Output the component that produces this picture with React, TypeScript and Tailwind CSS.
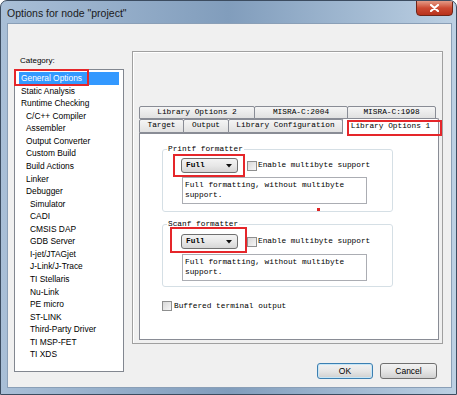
import React from 'react'

const mono = "font-['Liberation_Mono','DejaVu_Sans_Mono',monospace]"
const sans = "font-['Liberation_Sans',Arial,sans-serif]"

const categories: [string, number][] = [
  ['General Options', 0],
  ['Static Analysis', 0],
  ['Runtime Checking', 0],
  ['C/C++ Compiler', 1],
  ['Assembler', 1],
  ['Output Converter', 1],
  ['Custom Build', 1],
  ['Build Actions', 1],
  ['Linker', 1],
  ['Debugger', 1],
  ['Simulator', 2],
  ['CADI', 2],
  ['CMSIS DAP', 2],
  ['GDB Server', 2],
  ['I-jet/JTAGjet', 2],
  ['J-Link/J-Trace', 2],
  ['TI Stellaris', 2],
  ['Nu-Link', 2],
  ['PE micro', 2],
  ['ST-LINK', 2],
  ['Third-Party Driver', 2],
  ['TI MSP-FET', 2],
  ['TI XDS', 2],
]

const indent = ['pl-[2px]', 'pl-[7px]', 'pl-[11px]']

function Checkbox() {
  return (
    <span className="block w-[10px] h-[10px] shrink-0 border border-[#8e8f8f] bg-gradient-to-br from-[#d8d8d8] to-[#f7f7f7]" />
  )
}

function Select({ redBox }: { redBox: string }) {
  return (
    <div className="relative w-[57px] h-[15px] shrink-0">
      <div className="flex items-center h-full rounded-[3px] border border-[#707070] bg-gradient-to-b from-[#f3f3f3] via-[#e8e8e8] to-[#d6d6d6] pl-[4px] pr-[5px]">
        <span className="text-[7.8px] leading-[9px] font-bold">Full</span>
        <svg className="ml-auto" width="6" height="4" viewBox="0 0 6 4">
          <polygon points="0,0 6,0 3,3.5" fill="#111" />
        </svg>
      </div>
      <div className={`absolute border-2 border-[#e5262a] ${redBox}`} />
    </div>
  )
}

function Formatter({
  title,
  mt,
  rowMt,
  boxMt,
  pb,
  redBox,
  dot,
}: {
  title: string
  mt: string
  rowMt: string
  boxMt: string
  pb: string
  redBox: string
  dot?: boolean
}) {
  return (
    <fieldset className={`relative ml-[22px] w-[231px] rounded-[3px] border border-[#d5dfe5] px-0 ${mt} ${pb}`}>
      <legend className="ml-[4px] px-[1px] text-[7.8px] leading-[9px]">{title}</legend>
      <div className={`flex items-center ml-[18px] ${rowMt}`}>
        <Select redBox={redBox} />
        <div className="ml-[9px]">
          <Checkbox />
        </div>
        <span className="ml-[1px] text-[7.8px] leading-[9px]">Enable multibyte support</span>
      </div>
      <div className={`ml-[19px] w-[185px] h-[27px] border border-[#abadb3] bg-white px-[2px] pt-[2px] text-[7.8px] leading-[10px] ${boxMt}`}>
        Full formatting, without multibyte
        <br />
        support.
      </div>
      {dot && <span className="absolute left-[154px] bottom-0 w-[3px] h-[3px] bg-[#e02424]" />}
    </fieldset>
  )
}

const tab = 'flex items-center justify-center border border-[#898c95] rounded-t-[2px] bg-gradient-to-b from-[#f5f5f5] to-[#e1e1e1] -mr-px'

export default function App() {
  return (
    <div className={`w-[457px] h-[395px] overflow-hidden rounded-t-[7px] border border-[#3c4c60] bg-gradient-to-r from-[#a9bfd7] via-[#819dbc] to-[#bcd0e3] text-black ${sans}`}>
      {/* Title bar */}
      <div className="flex items-start h-[22px]">
        <span className="ml-[6px] mt-[6px] text-[10.5px] leading-[12px] text-[#1a1a1a]">Options for node "project"</span>
        <div className="ml-auto mr-[3px] w-[37px] h-[16px] -mt-px flex items-center justify-center rounded-b-[4px] border border-[#6e2518] bg-gradient-to-b from-[#e39a86] via-[#cc4a32] to-[#b8321c]">
          <svg width="9" height="8" viewBox="0 0 9 8">
            <path d="M1 1 L8 7 M8 1 L1 7" stroke="#fff" strokeWidth="2.2" strokeLinecap="round" />
          </svg>
        </div>
      </div>

      {/* Client area */}
      <div className="ml-[6px] w-[445px] h-[365px] border border-[#8a9fb7] bg-[#f0f0f0]">
        <div className="flex">
          {/* Category list */}
          <div className="pl-[6px] pt-[31px]">
            <div className="text-[8px] leading-[11px] pl-[6px]">Category:</div>
            <div className="mt-[3px] w-[110px] h-[303px] border border-[#828790] bg-white pt-[2px] text-[8.4px]">
              {categories.map(([name, level], i) => (
                <div
                  key={name}
                  className={`relative mx-[4px] h-[12.57px] leading-[12.57px] whitespace-nowrap ${indent[level]} ${
                    i === 0 ? 'bg-[#3399ff] text-white' : ''
                  }`}
                >
                  {name}
                  {i === 0 && <div className="absolute -left-[5px] -top-[3px] w-[75px] h-[17px] border-2 border-[#e5262a]" />}
                </div>
              ))}
            </div>
          </div>

          {/* Options panel */}
          <div className="ml-[8px] pt-[27px]">
            <div className="w-[311px] h-[293px] border border-[#a0a0a0] shadow-[inset_1px_1px_0_#ffffff] pl-[6px] pt-[54px]">
              <div className={`w-[300px] text-[7.8px] ${mono}`}>
                <div className="flex h-[13px]">
                  <div className={`${tab} w-[116px]`}>Library Options 2</div>
                  <div className={`${tab} w-[94px]`}>MISRA-C:2004</div>
                  <div className={`${tab} w-[89px]`}>MISRA-C:1998</div>
                </div>
                <div className="flex items-end h-[14px] relative z-10">
                  <div className={`${tab} w-[45px] h-[14px]`}>Target</div>
                  <div className={`${tab} w-[46px] h-[14px]`}>Output</div>
                  <div className={`${tab} w-[115px] h-[14px]`}>Library Configuration</div>
                  <div className="relative w-[97px] h-[16px] -mb-px flex items-center justify-center border border-b-0 border-[#898c95] rounded-t-[2px] bg-white">
                    Library Options 1
                    <div className="absolute left-[4px] -right-[4px] top-[1px] -bottom-[2px] border-2 border-[#e5262a]" />
                  </div>
                </div>
                <div className="h-[207px] border border-[#898c95] bg-white">
                  <Formatter
                    title="Printf formatter"
                    mt="mt-[11px]"
                    rowMt="mt-[4px]"
                    boxMt="mt-[4px]"
                    pb="pb-[7px]"
                    redBox="-left-[8px] -right-[7px] -top-[4px] -bottom-[4px]"
                    dot
                  />
                  <Formatter
                    title="Scanf formatter"
                    mt="mt-[8px]"
                    rowMt="mt-[5px]"
                    boxMt="mt-[5px]"
                    pb="pb-[5px]"
                    redBox="-left-[11px] -right-[9px] -top-[7px] -bottom-[4px]"
                  />
                  <div className="flex items-center ml-[22px] mt-[14px]">
                    <Checkbox />
                    <span className="ml-[2px] text-[7.8px] leading-[9px]">Buffered terminal output</span>
                  </div>
                </div>
              </div>
            </div>

            {/* Buttons */}
            <div className="flex justify-end gap-[7px] pr-[6px] mt-[19px] text-[8.5px]">
              <button className="w-[56px] h-[16px] rounded-[3px] border border-[#3c7fb1] bg-gradient-to-b from-[#f2f2f2] via-[#e6e6e6] to-[#d0d0d0] shadow-[inset_0_0_0_1px_#c6e6f7]">
                OK
              </button>
              <button className="w-[57px] h-[16px] rounded-[3px] border border-[#707070] bg-gradient-to-b from-[#f2f2f2] via-[#e6e6e6] to-[#d0d0d0]">
                Cancel
              </button>
            </div>
          </div>
        </div>
      </div>
    </div>
  )
}
